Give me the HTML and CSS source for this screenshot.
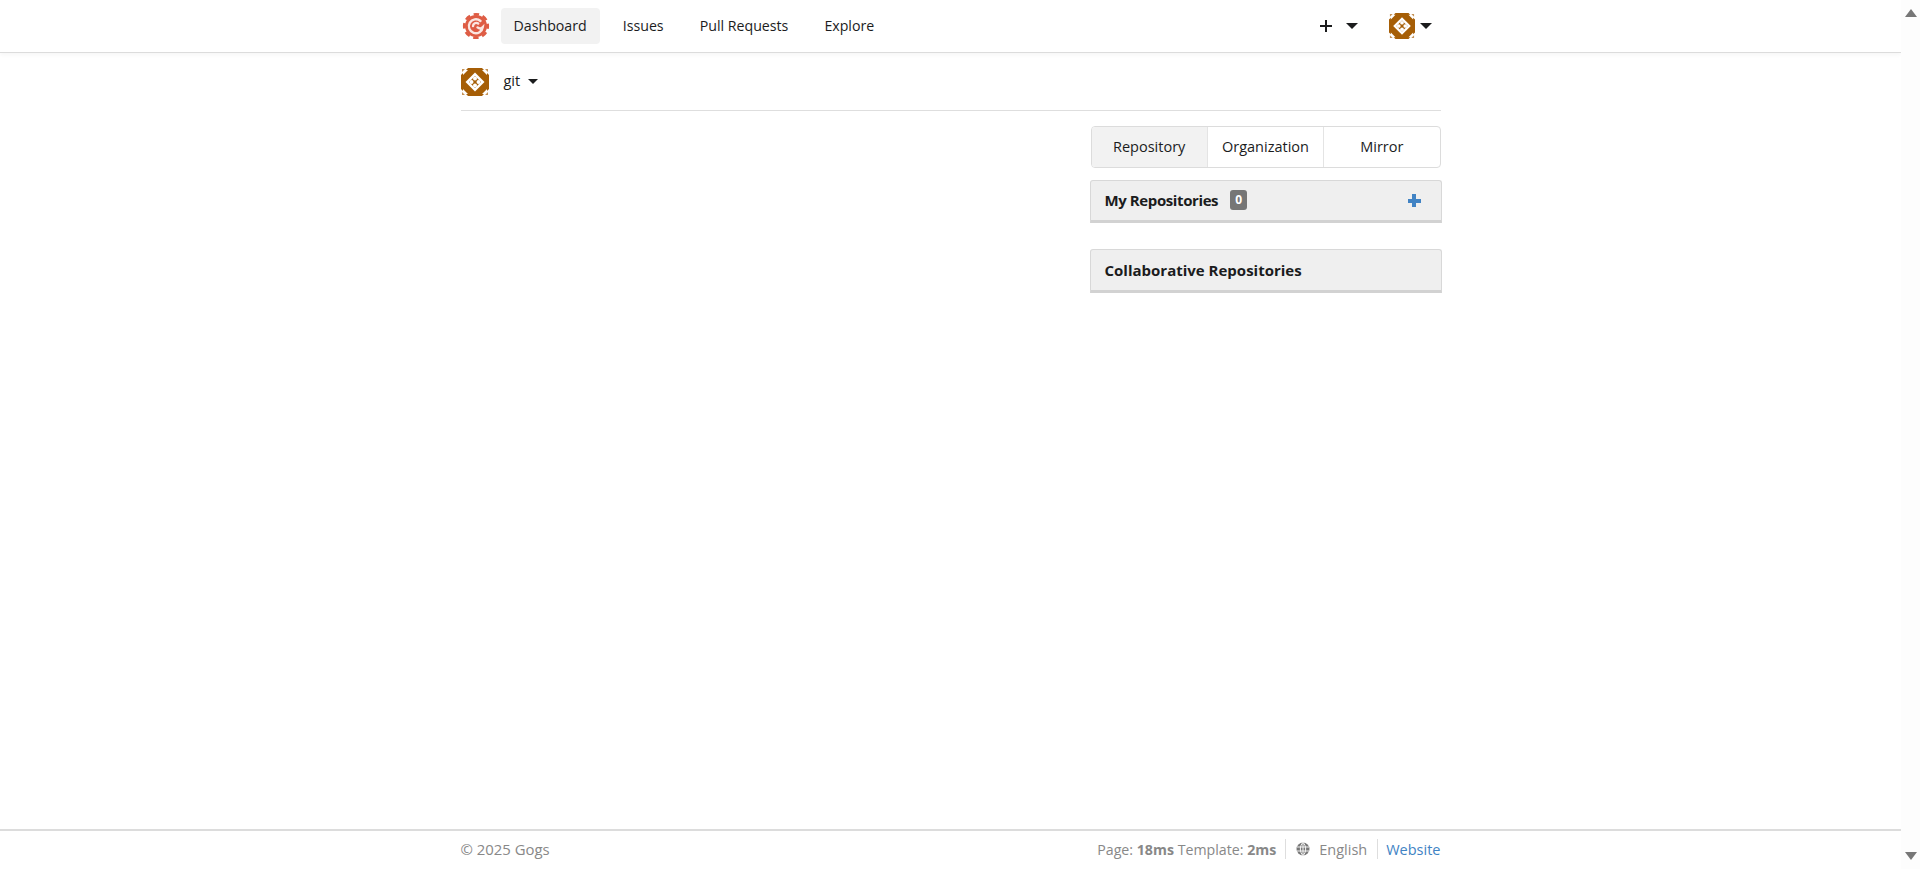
FILE: index.html

```html
<!DOCTYPE html>
<html>
  <head>
    <meta charset="utf-8" />
    <title>git - Dashboard - Gogs</title>
    <link rel="stylesheet" href="styles.css">
  </head>
  <body>
    <svg class="defs" width="0" height="0">
      <symbol id="avatar" viewBox="0 0 28 28">
        <rect width="28" height="28" fill="#a65e06"/>
        <path fill="#fff" d="M14 4.500L23.500 14 14 23.500 4.500 14z"/>
        <path fill="#a65e06" d="M14 8L20 14 14 20 8 14z"/>
        <circle fill="#fff" cx="14" cy="10.500" r="2"/>
        <circle fill="#fff" cx="14" cy="17.500" r="2"/>
        <circle fill="#fff" cx="10.500" cy="14" r="2"/>
        <circle fill="#fff" cx="17.500" cy="14" r="2"/>
        <path fill="#fff" d="M0 0h7L5 2h2L2 7V5L0 7zM28 0h-7l2 2h-2l5 5V5l2 2zM0 28h7l-2-2h2l-5-5v2l-2-2zM28 28h-7l2-2h-2l5-5v2l2-2z"/>
        <path fill="#c49358" d="M1 1h3L1 4zM27 1h-3l3 3zM1 27h3l-3-3zM27 27h-3l3-3z"/>
      </symbol>
    </svg>
    <div class="window">
      <div class="page">
        <!-- top bar -->
        <div class="topbar">
          <div class="wrap topbar-in">
            <svg class="logo" viewBox="0 0 28 28">
              <circle cx="14" cy="14" r="11" fill="#de5c44"/>
              <circle cx="14" cy="14" r="11.800" fill="none" stroke="#de5c44" stroke-width="2.600" stroke-dasharray="5.500 3.770" stroke-dashoffset="2.750"/>
              <path fill="none" stroke="#fbe6e1" stroke-width="2.400" stroke-linecap="round" d="M18.500 9a7 7 0 1 0 2.300 6.200c-1.600 1.600-3.600 1.600-5.300.2M16.200 11.500a3.300 3.300 0 0 0-5.200 2.600"/>
            </svg>
            <a class="nav-item active">Dashboard</a>
            <a class="nav-item">Issues</a>
            <a class="nav-item">Pull Requests</a>
            <a class="nav-item">Explore</a>
            <div class="nav-right">
              <span class="plus-mark"></span>
              <span class="caret caret-plus"></span>
              <svg class="avatar-sm"><use href="#avatar"/></svg>
              <span class="caret"></span>
            </div>
          </div>
        </div>

        <!-- content -->
        <div class="wrap content">
          <div class="context">
            <svg class="avatar-ctx"><use href="#avatar"/></svg>
            <span class="context-name">git</span>
            <span class="caret caret-small"></span>
          </div>
          <div class="side">
            <div class="tabs">
              <a class="tab active">Repository</a>
              <a class="tab">Organization</a>
              <a class="tab">Mirror</a>
            </div>
            <div class="panel panel-first">
              <span class="panel-title">My Repositories</span>
              <span class="badge">0</span>
              <span class="panel-plus"></span>
            </div>
            <div class="panel panel-second">
              <span class="panel-title">Collaborative Repositories</span>
            </div>
          </div>
        </div>

        <!-- footer -->
        <div class="footer">
          <div class="wrap footer-in">
            <span class="copy">© 2025 Gogs</span>
            <div class="footer-right">
              <span class="stats">Page: <b>18ms</b> Template: <b>2ms</b></span>
              <span class="sep"></span>
              <svg class="globe" viewBox="0 0 14 14">
                <circle cx="7" cy="7" r="6.500" fill="#777"/>
                <path fill="none" stroke="#fff" stroke-width=".9" d="M1 5h12M1 9h12M7 .5v13M7 .5c-3.500 3-3.500 10 0 13M7 .5c3.500 3 3.500 10 0 13"/>
              </svg>
              <span class="lang">English</span>
              <span class="sep sep-last"></span>
              <a class="site-link">Website</a>
            </div>
          </div>
        </div>
      </div>

      <!-- scrollbar -->
      <div class="scrollbar">
        <span class="arrow-up"></span>
        <span class="arrow-down"></span>
      </div>
    </div>
  </body>
</html>
```

FILE: styles.css

```css
* {
  box-sizing: border-box;
}
body {
  margin: 0;
  padding: 0;
  background-color: #fff;
  color: #1b1c1d;
  font-family: "Open Sans", "Noto Sans", Arial, sans-serif;
  font-size: 14px;
}
.defs {
  display: block;
  height: 0;
}
.window {
  display: flex;
  height: 869px;
  overflow: hidden;
}
.page {
  flex: 1;
  display: flex;
  flex-direction: column;
}
.wrap {
  width: 980px;
  margin: 0 auto;
}

.topbar {
  height: 53px;
  border-bottom: 1px solid #dcdcdc;
  box-shadow: 0 2px 4px rgba(0, 0, 0, 0.04);
}
.topbar-in {
  display: flex;
  align-items: center;
  height: 52px;
}
.logo {
  width: 28px;
  height: 28px;
  margin-left: 1px;
  margin-right: 11px;
}
.nav-item {
  height: 36px;
  line-height: 35px;
  padding: 0 13px;
  margin-right: 10px;
  border-radius: 4px;
  font-size: 14.200px;
}
.nav-item.active {
  background-color: #f2f2f2;
}
.nav-right {
  margin-left: auto;
  display: flex;
  align-items: center;
  padding-right: 9px;
}
.plus-mark {
  width: 12px;
  height: 12px;
  margin-right: 14px;
  background:
    linear-gradient(#1b1c1d, #1b1c1d) center / 12px 2px no-repeat,
    linear-gradient(#1b1c1d, #1b1c1d) center / 2px 12px no-repeat;
}
.caret {
  width: 0;
  height: 0;
  border-left: 6px solid transparent;
  border-right: 6px solid transparent;
  border-top: 6px solid #1b1c1d;
}
.caret-plus {
  margin-right: 31px;
}
.avatar-sm {
  width: 26px;
  height: 26px;
  margin-right: 5px;
}

.content {
  flex: 1;
  display: flex;
  flex-direction: column;
}
.context {
  display: flex;
  align-items: center;
  height: 58px;
  border-bottom: 1px solid #dedede;
}
.avatar-ctx {
  width: 28px;
  height: 28px;
  margin-right: 15px;
}
.context-name {
  font-size: 14.500px;
  margin-right: 8px;
  margin-top: -2px;
}
.caret-small {
  border-left-width: 5px;
  border-right-width: 5px;
  border-top-width: 5px;
}
.side {
  width: 352px;
  margin-left: auto;
  margin-right: -1px;
  padding-top: 15px;
}
.tabs {
  display: flex;
  height: 42px;
  margin: 0 1px;
  border: 1px solid #dcdcdc;
  border-radius: 4px;
  overflow: hidden;
  font-size: 14.500px;
}
.tab {
  flex: 1;
  line-height: 39px;
  text-align: center;
  border-left: 1px solid #e4e4e4;
}
.tab:first-child {
  border-left: none;
}
.tab.active {
  background-color: #f2f2f2;
}
.panel {
  display: flex;
  align-items: center;
  padding: 0 14px;
  background-color: #efefef;
  border: 1px solid #d8d8d8;
  border-bottom: 3px solid #d2d2d2;
  border-radius: 3px 3px 0 0;
}
.panel-first {
  height: 43px;
  margin-top: 12px;
}
.panel-first .panel-title {
  margin-top: -1px;
  letter-spacing: -0.4px;
}
.panel-second {
  height: 44px;
  margin-top: 26px;
}
.panel-title {
  font-weight: 700;
  font-size: 15px;
}
.badge {
  margin-left: 12px;
  margin-top: -1px;
  width: 17px;
  height: 20px;
  line-height: 20px;
  text-align: center;
  font-size: 12px;
  font-weight: 700;
  color: #fff;
  background-color: #767676;
  border-radius: 3px;
}
.panel-plus {
  margin-left: auto;
  margin-right: 6px;
  width: 13px;
  height: 13px;
  background:
    linear-gradient(#4183c4, #4183c4) center / 13px 4px no-repeat,
    linear-gradient(#4183c4, #4183c4) center / 4px 13px no-repeat;
}

.footer {
  height: 40px;
  border-top: 2px solid #dcdcdc;
  color: #888;
  font-size: 14.500px;
}
.footer-in {
  display: flex;
  justify-content: space-between;
  align-items: center;
  height: 36px;
}
.copy {
  font-size: 14.900px;
}
.stats {
  font-size: 14.200px;
}
.footer-right {
  display: flex;
  align-items: center;
}
.sep {
  width: 1px;
  height: 20px;
  margin: 0 9px;
  background-color: #dedede;
}
.sep-last {
  margin: 0 8px 0 10px;
}
.globe {
  width: 14px;
  height: 14px;
  margin: 0 9px 0 1px;
}
.site-link {
  color: #4183c4;
}

.scrollbar {
  width: 19px;
  display: flex;
  flex-direction: column;
  justify-content: space-between;
  align-items: center;
  padding: 9px 0 9px;
  background-color: #fdfdfd;
}
.arrow-up,
.arrow-down {
  width: 0;
  height: 0;
  border-left: 6px solid transparent;
  border-right: 6px solid transparent;
}
.arrow-up {
  border-bottom: 8px solid #777;
}
.arrow-down {
  border-top: 8px solid #777;
}
```
